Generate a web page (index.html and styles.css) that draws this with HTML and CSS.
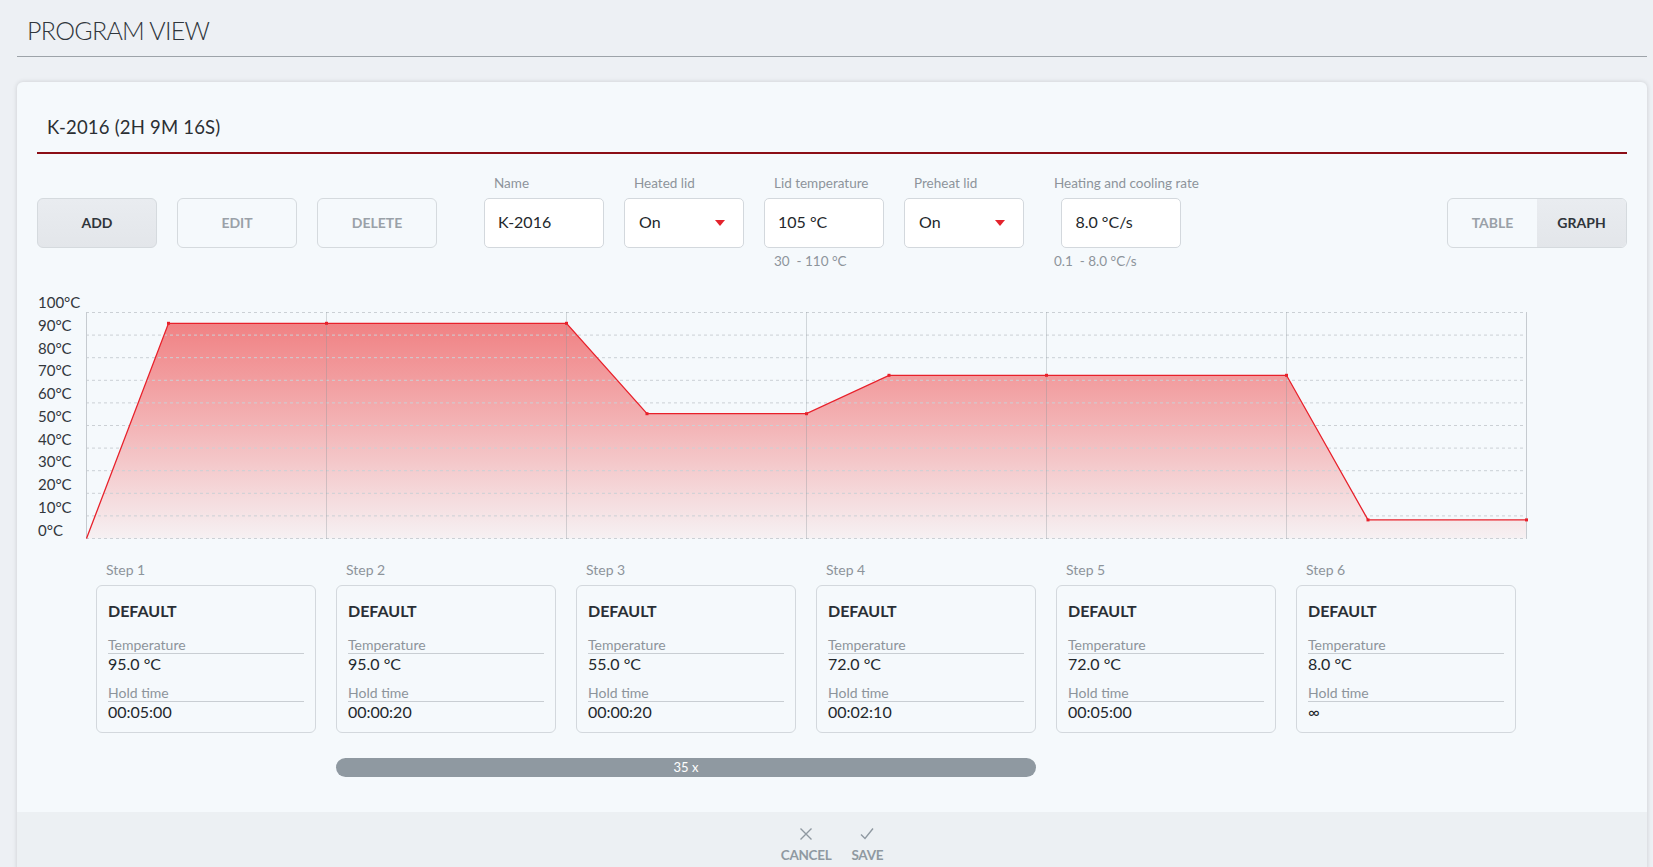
FILE: index.html
```html
<!DOCTYPE html>
<html lang="en">
<head>
<meta charset="utf-8">
<title>Program view</title>
<link rel="stylesheet" href="styles.css">
</head>
<body>
<header class="page-header">
  <h1 class="page-title">PROGRAM VIEW</h1>
</header>

<section class="card">
  <div class="card-body">
    <div class="card-title">K-2016 (2H 9M 16S)</div>

    <div class="toolbar">
      <div class="actions">
        <button class="btn btn-active">ADD</button>
        <button class="btn">EDIT</button>
        <button class="btn">DELETE</button>
      </div>

      <div class="fields">
        <div class="field">
          <span class="field-label">Name</span>
          <div class="input">K-2016</div>
        </div>
        <div class="field">
          <span class="field-label">Heated lid</span>
          <div class="input select">On<span class="caret"></span></div>
        </div>
        <div class="field">
          <span class="field-label">Lid temperature</span>
          <div class="input">105 °C</div>
          <span class="field-hint">30&nbsp; - 110 °C</span>
        </div>
        <div class="field">
          <span class="field-label">Preheat lid</span>
          <div class="input select">On<span class="caret"></span></div>
        </div>
        <div class="field">
          <span class="field-label">Heating and cooling rate</span>
          <div class="input">8.0 °C/s</div>
          <span class="field-hint">0.1&nbsp; - 8.0 °C/s</span>
        </div>
      </div>

      <div class="view-toggle">
        <span class="toggle-item">TABLE</span>
        <span class="toggle-item toggle-active">GRAPH</span>
      </div>
    </div>

    <div class="chart">
      <div class="y-axis">
        <span>100°C</span><span>90°C</span><span>80°C</span><span>70°C</span><span>60°C</span><span>50°C</span><span>40°C</span><span>30°C</span><span>20°C</span><span>10°C</span><span>0°C</span>
      </div>
      <svg class="plot" width="1444" height="229" viewBox="0 0 1444 229">
        <defs>
          <linearGradient id="fillGrad" gradientUnits="userSpaceOnUse" x1="0" y1="0" x2="0" y2="227">
            <stop offset="0" stop-color="#f07c7e"/>
            <stop offset="0.5" stop-color="#f3b4b6"/>
            <stop offset="1" stop-color="#f6f1f3"/>
          </linearGradient>
        </defs>
        <polygon fill="url(#fillGrad)" points="0.5,226.5 82.5,11.3 240.5,11.3 480.5,11.3 561,101.7 720.5,101.7 803,63.3 960.5,63.3 1200.5,63.3 1282,207.9 1440.5,207.9 1440.5,226.5"/>
        <g stroke="#cbd0d5" stroke-width="1" stroke-dasharray="3 3">
          <line x1="0" y1="0.5" x2="1441" y2="0.5"/>
          <line x1="0" y1="23.1" x2="1441" y2="23.1"/>
          <line x1="0" y1="45.7" x2="1441" y2="45.7"/>
          <line x1="0" y1="68.3" x2="1441" y2="68.3"/>
          <line x1="0" y1="90.9" x2="1441" y2="90.9"/>
          <line x1="0" y1="113.5" x2="1441" y2="113.5"/>
          <line x1="0" y1="136.1" x2="1441" y2="136.1"/>
          <line x1="0" y1="158.7" x2="1441" y2="158.7"/>
          <line x1="0" y1="181.3" x2="1441" y2="181.3"/>
          <line x1="0" y1="203.9" x2="1441" y2="203.9"/>
          <line x1="0" y1="226.5" x2="1441" y2="226.5"/>
        </g>
        <g stroke="rgba(140,148,156,0.35)" stroke-width="1">
          <line x1="240.5" y1="0" x2="240.5" y2="227"/>
          <line x1="480.5" y1="0" x2="480.5" y2="227"/>
          <line x1="720.5" y1="0" x2="720.5" y2="227"/>
          <line x1="960.5" y1="0" x2="960.5" y2="227"/>
          <line x1="1200.5" y1="0" x2="1200.5" y2="227"/>
        </g>
        <g stroke="#c6cbd0" stroke-width="1">
          <line x1="0.5" y1="0" x2="0.5" y2="227"/>
          <line x1="1440.5" y1="0" x2="1440.5" y2="227"/>
        </g>
        <polyline fill="none" stroke="#e8212b" stroke-width="1.3" points="0.5,226.5 82.5,11.3 240.5,11.3 480.5,11.3 561,101.7 720.5,101.7 803,63.3 960.5,63.3 1200.5,63.3 1282,207.9 1440.5,207.9"/>
        <g fill="#e8212b">
          <rect x="81" y="9.8" width="3" height="3"/>
          <rect x="239" y="9.8" width="3" height="3"/>
          <rect x="479" y="9.8" width="3" height="3"/>
          <rect x="559.5" y="100.2" width="3" height="3"/>
          <rect x="719" y="100.2" width="3" height="3"/>
          <rect x="801.5" y="61.8" width="3" height="3"/>
          <rect x="959" y="61.8" width="3" height="3"/>
          <rect x="1199" y="61.8" width="3" height="3"/>
          <rect x="1280.5" y="206.4" width="3" height="3"/>
          <rect x="1439" y="206.4" width="3" height="3"/>
        </g>
      </svg>
    </div>

    <div class="steps">
      <div class="step">
        <div class="step-label">Step 1</div>
        <div class="step-card">
          <div class="step-name">DEFAULT</div>
          <div class="prop-label">Temperature</div>
          <div class="prop-value">95.0 °C</div>
          <div class="prop-label prop-label-2">Hold time</div>
          <div class="prop-value">00:05:00</div>
        </div>
      </div>
      <div class="step">
        <div class="step-label">Step 2</div>
        <div class="step-card">
          <div class="step-name">DEFAULT</div>
          <div class="prop-label">Temperature</div>
          <div class="prop-value">95.0 °C</div>
          <div class="prop-label prop-label-2">Hold time</div>
          <div class="prop-value">00:00:20</div>
        </div>
      </div>
      <div class="step">
        <div class="step-label">Step 3</div>
        <div class="step-card">
          <div class="step-name">DEFAULT</div>
          <div class="prop-label">Temperature</div>
          <div class="prop-value">55.0 °C</div>
          <div class="prop-label prop-label-2">Hold time</div>
          <div class="prop-value">00:00:20</div>
        </div>
      </div>
      <div class="step">
        <div class="step-label">Step 4</div>
        <div class="step-card">
          <div class="step-name">DEFAULT</div>
          <div class="prop-label">Temperature</div>
          <div class="prop-value">72.0 °C</div>
          <div class="prop-label prop-label-2">Hold time</div>
          <div class="prop-value">00:02:10</div>
        </div>
      </div>
      <div class="step">
        <div class="step-label">Step 5</div>
        <div class="step-card">
          <div class="step-name">DEFAULT</div>
          <div class="prop-label">Temperature</div>
          <div class="prop-value">72.0 °C</div>
          <div class="prop-label prop-label-2">Hold time</div>
          <div class="prop-value">00:05:00</div>
        </div>
      </div>
      <div class="step">
        <div class="step-label">Step 6</div>
        <div class="step-card">
          <div class="step-name">DEFAULT</div>
          <div class="prop-label">Temperature</div>
          <div class="prop-value">8.0 °C</div>
          <div class="prop-label prop-label-2">Hold time</div>
          <div class="prop-value">∞</div>
        </div>
      </div>
    </div>

    <div class="repeat-row">
      <div class="repeat-bar">35 x</div>
    </div>
  </div>

  <div class="card-footer">
    <button class="footer-btn">
      <svg width="14" height="14" viewBox="0 0 14 14"><path d="M1.5 1.5 L12.5 12.5 M12.5 1.5 L1.5 12.5" stroke="#8f99a1" stroke-width="1.4" fill="none"/></svg>
      <span>CANCEL</span>
    </button>
    <button class="footer-btn">
      <svg width="14" height="14" viewBox="0 0 14 14"><path d="M1 7.5 L5 11.5 L13 1.5" stroke="#8f99a1" stroke-width="1.4" fill="none"/></svg>
      <span>SAVE</span>
    </button>
  </div>
</section>
</body>
</html>
```

FILE: styles.css
```css
* { box-sizing: border-box; }
html, body { margin: 0; padding: 0; }
body {
  background: #edf0f4;
  font-family: Lato, "Open Sans", "DejaVu Sans", sans-serif;
  color: #2b3036;
  width: 1653px;
  height: 867px;
  overflow: hidden;
}

/* Page header */
.page-header {
  height: 57px;
  margin: 0 6px 0 17px;
  padding: 15px 0 0 10px;
  border-bottom: 1px solid #9da3a9;
}
.page-title {
  margin: 0;
  font-size: 25px;
  line-height: 30px;
  font-weight: 300;
  letter-spacing: -0.7px;
  color: #30363c;
}

/* Card */
.card {
  margin: 25px 0 0 17px;
  width: 1630px;
  background: #f5f9fc;
  border-radius: 6px 6px 0 0;
  box-shadow: 0 0 5px rgba(0, 0, 0, 0.14);
}
.card-body {
  padding: 0 20px 35px 20px;
}
.card-title {
  padding: 33px 0 13px 10px;
  font-size: 18.5px;
  line-height: 24px;
  letter-spacing: 0.2px;
  color: #2b2f33;
  border-bottom: 2px solid #8b0e16;
}

/* Toolbar */
.toolbar {
  display: flex;
  align-items: flex-start;
  margin-top: 21px;
}
.actions {
  display: flex;
  gap: 20px;
  margin-top: 23px;
}
.btn {
  width: 120px;
  height: 50px;
  border: 1px solid #d5dade;
  border-radius: 6px;
  background: transparent;
  font-family: inherit;
  font-size: 14px;
  font-weight: 700;
  color: #9aa1a8;
  padding: 0 0 2px 0;
}
.btn-active {
  background: linear-gradient(#e9ecf0, #e3e6ea);
  color: #30353b;
}
.fields {
  display: flex;
  gap: 20px;
  margin-left: 47px;
}
.field {
  display: flex;
  flex-direction: column;
  align-items: flex-start;
  min-width: 120px;
}
.field-label {
  padding-left: 10px;
  font-size: 13.5px;
  line-height: 16px;
  color: #8d949b;
  margin-bottom: 7px;
  white-space: nowrap;
}
.input {
  align-self: center;
  position: relative;
  width: 120px;
  height: 50px;
  background: #ffffff;
  border: 1px solid #d3d8dd;
  border-radius: 5px;
  padding: 0 0 0 13px;
  font-size: 16px;
  line-height: 46px;
  color: #23272b;
}
.select { padding-left: 14px; }
.caret {
  position: absolute;
  right: 18px;
  top: 21px;
  width: 0;
  height: 0;
  border-left: 5px solid transparent;
  border-right: 5px solid transparent;
  border-top: 6px solid #e3232c;
}
.field-hint {
  padding-left: 10px;
  margin-top: 5px;
  font-size: 13.5px;
  line-height: 16px;
  color: #8d949b;
  white-space: pre;
}
.view-toggle {
  margin-left: auto;
  margin-top: 23px;
  display: flex;
  height: 50px;
  border: 1px solid #d5dade;
  border-radius: 6px;
  overflow: hidden;
}
.toggle-item {
  width: 89px;
  display: flex;
  align-items: center;
  justify-content: center;
  padding-bottom: 2px;
  font-size: 14px;
  font-weight: 700;
  color: #9aa1a8;
}
.toggle-active {
  background: linear-gradient(#e9ecf0, #e3e6ea);
  color: #30353b;
}

/* Chart */
.chart {
  display: flex;
  align-items: flex-start;
  margin-top: 22px;
}
.y-axis {
  width: 49px;
  padding-left: 1px;
  display: flex;
  flex-direction: column;
}
.y-axis span {
  height: 22.75px;
  line-height: 22.75px;
  font-size: 15px;
  color: #32373c;
}
.plot {
  display: block;
  margin-top: 21px;
  overflow: visible;
}

/* Steps */
.steps {
  display: flex;
  margin-left: 49px;
  margin-top: 20px;
}
.step {
  width: 240px;
  padding: 0 10px;
}
.step-label {
  padding-left: 10px;
  font-size: 14px;
  line-height: 18px;
  color: #8d949b;
  margin-bottom: 6px;
}
.step-card {
  height: 148px;
  border: 1px solid #d3d8dd;
  border-radius: 6px;
  padding: 15px 11px 0 11px;
}
.step-name {
  font-size: 16px;
  line-height: 20px;
  font-weight: 700;
  color: #2a2f35;
}
.prop-label {
  margin-top: 16px;
  font-size: 14px;
  line-height: 16px;
  color: #8d949b;
  border-bottom: 1px solid #c9ced3;
}
.prop-label-2 { margin-top: 12px; }
.prop-value {
  font-size: 16px;
  line-height: 19px;
  color: #23272b;
}

/* Repeat bar */
.repeat-row {
  display: grid;
  grid-template-columns: repeat(6, 240px);
  margin-left: 49px;
  margin-top: 25px;
}
.repeat-bar {
  grid-column: 2 / 5;
  margin: 0 10px;
  height: 19px;
  border-radius: 10px;
  background: #8f99a1;
  color: #ffffff;
  font-size: 13px;
  line-height: 19px;
  text-align: center;
}

/* Footer */
.card-footer {
  background: #ecf0f3;
  height: 60px;
  display: flex;
  justify-content: center;
  gap: 20px;
  padding-top: 15px;
}
.footer-btn {
  display: flex;
  flex-direction: column;
  align-items: center;
  background: none;
  border: none;
  padding: 0;
  font-family: inherit;
  font-size: 13.5px;
  font-weight: 700;
  letter-spacing: -0.3px;
  line-height: 16px;
  color: #8f99a1;
}
.footer-btn span { margin-top: 6px; }
```
